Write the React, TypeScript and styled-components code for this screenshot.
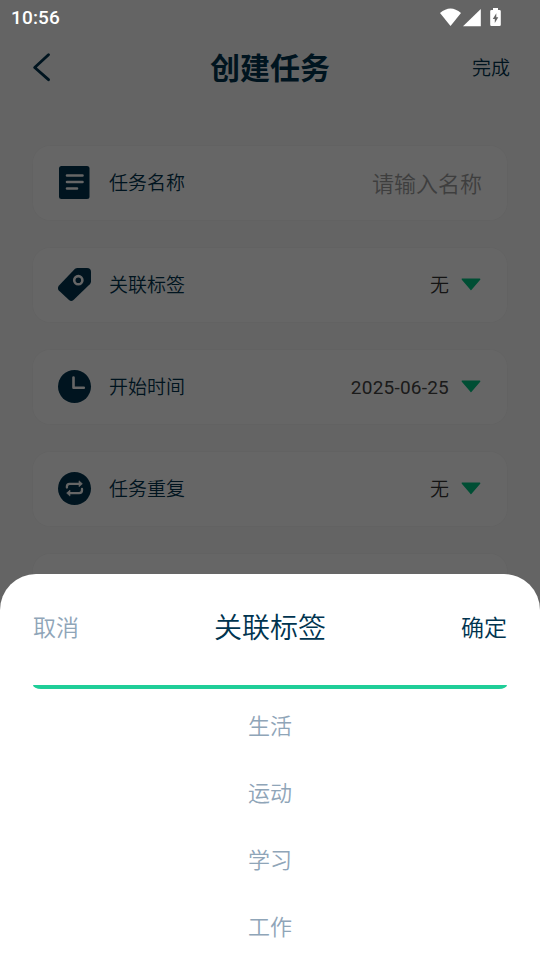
import React from "react";
import styled, { createGlobalStyle } from "styled-components";

const GlobalStyle = createGlobalStyle`
  *, *::before, *::after { box-sizing: border-box; }
  html, body { margin: 0; padding: 0; }
  body { overflow: hidden; }
  button { border: 0; padding: 0; background: none; font: inherit; color: inherit; }
`;

const Screen = styled.main`
  position: relative;
  width: 540px;
  height: 960px;
  overflow: hidden;
  background: #fbfbfb;
  color: #00344f;
  font-family: Roboto, "Noto Sans CJK SC", sans-serif;
  font-weight: 350;
`;

const StatusBar = styled.div`
  position: relative;
  z-index: 3;
  height: 34px;
  padding: 0 39px 0 11px;
  display: flex;
  align-items: center;
  justify-content: space-between;
  color: #fff;
  font-size: 19px;
  font-weight: 500;
  letter-spacing: 0.15px;
`;

const Clock = styled.span`
  padding-top: 1px;
  line-height: 34px;
`;

const StatusIcons = styled.div`
  display: flex;
  height: 30px;
`;

const Header = styled.header`
  height: 66px;
  padding: 0 30px 0 32px;
  display: grid;
  grid-template-columns: 78px 1fr 80px;
  align-items: center;
`;

const BackButton = styled.button`
  display: flex;
`;

const Title = styled.h1`
  margin: 0;
  padding-top: 4px;
  text-align: center;
  font-size: 30px;
  line-height: 40px;
  font-weight: 700;
`;

const DoneButton = styled.button`
  padding-top: 3px;
  text-align: right;
  font-size: 19px;
  line-height: 28px;
`;

const Form = styled.section`
  padding: 46px 33px 0;
  display: flex;
  flex-direction: column;
  gap: 28px;
`;

const Card = styled.div`
  height: 74px;
  flex: none;
  padding: 0 25px;
  border-radius: 17px;
  background: #fff;
  box-shadow: 0 0 2px 1px #f5f5f5;
  display: flex;
  align-items: center;
`;

const Label = styled.span`
  margin-left: 17px;
  padding-top: 2px;
  flex: 1;
  font-size: 19px;
  line-height: 28px;
`;

const Placeholder = styled.span`
  padding-top: 3px;
  color: #9c9c9c;
  font-size: 22px;
  line-height: 30px;
`;

const CardEnd = styled.span`
  display: flex;
  align-items: center;
  margin-right: 1px;
`;

const Value = styled.span<{ $numeric?: boolean }>`
  margin-right: 12px;
  padding-top: 2px;
  color: ${(p) => (p.$numeric ? "#444" : "#333")};
  font-size: 19px;
  line-height: 28px;
  font-weight: ${(p) => (p.$numeric ? 400 : 350)};
  letter-spacing: ${(p) => (p.$numeric ? "0.22px" : "0")};
`;

const Backdrop = styled.div`
  position: absolute;
  inset: 0;
  z-index: 2;
  background: rgba(0, 0, 0, 0.6);
  display: flex;
  align-items: flex-end;
`;

const Sheet = styled.section`
  width: 100%;
  height: 386px;
  padding: 0 33px;
  border-radius: 36px 36px 0 0;
  background: #fff;
`;

const SheetHeader = styled.div`
  height: 111px;
  padding-bottom: 1px;
  display: flex;
  align-items: center;
  justify-content: space-between;
`;

const SheetTitle = styled.h2`
  margin: 0;
  font-size: 28px;
  line-height: 40px;
  font-weight: 350;
`;

const SheetAction = styled.button<{ $muted?: boolean }>`
  color: ${(p) => (p.$muted ? "#8fa5b8" : "#00344f")};
  font-size: 23px;
  line-height: 34px;
`;

const SelectionBar = styled.div`
  height: 4px;
  border-radius: 0 0 8px 8px / 0 0 4px 4px;
  background: #1fce98;
`;

const Options = styled.ul`
  list-style: none;
  margin: 0;
  padding: 4px 0 0;
`;

const Option = styled.li`
  height: 67px;
  line-height: 67px;
  text-align: center;
  font-size: 22px;
  color: #8fa5b8;
`;

const NAVY = "#00344f";

const BackIcon = () => (
  <svg width="20" height="32" viewBox="0 0 20 32" fill="none">
    <path d="M16.5 3.8 2.7 16.5l13.8 12.2" stroke={NAVY} strokeWidth="2.9" strokeLinecap="round" strokeLinejoin="round" />
  </svg>
);

const DocIcon = () => (
  <svg width="34" height="34" viewBox="0 0 34 34" fill="none">
    <rect x="1" y="0" width="30.5" height="33" rx="2.5" fill={NAVY} />
    <path d="M9 9.5h15.5M9 16h15.5M9 22.500h10" stroke="#fff" strokeWidth="2.6" strokeLinecap="round" />
  </svg>
);

const TagIcon = () => (
  <svg width="34" height="34" viewBox="0 0 34 34" fill="none">
    <path d="M17 .8Q18 0 19.5 0H29q4 0 4 4v9.5q0 1.5-1.2 2.7L15.5 32q-2.2 2-4.5 0L.8 22.5Q-1 20 1 17.6Z" fill={NAVY} />
    <circle cx="20.3" cy="12.2" r="4.1" stroke="#fff" strokeWidth="2.6" />
  </svg>
);

const ClockIcon = () => (
  <svg width="34" height="34" viewBox="0 0 34 34" fill="none">
    <circle cx="16.5" cy="16.5" r="16.5" fill={NAVY} />
    <path d="M15.5 7.5v10.2h10.3" stroke="#fff" strokeWidth="2.6" strokeLinecap="round" strokeLinejoin="round" />
  </svg>
);

const RepeatIcon = () => (
  <svg width="34" height="34" viewBox="0 0 34 34" fill="none">
    <circle cx="16.5" cy="16.5" r="16.5" fill={NAVY} />
    <path
      d="M8.9 15.5v-1q0-2.7 2.7-2.7h10.8M24 17v1.2q0 2.900-2.900 2.900H10.800"
      stroke="#fff" strokeWidth="2.3" strokeLinecap="round"
    />
    <path d="m21 8.800 3.400 3-3.400 3ZM12 18.100l-3.400 3 3.400 3Z" fill="#fff" stroke="#fff" strokeWidth=".6" strokeLinejoin="round" />
  </svg>
);

const Caret = () => (
  <svg width="20" height="14" viewBox="0 0 20 14">
    <path d="M1.4 1.200h17.2L10 11.300Z" fill="#00c382" stroke="#00c382" strokeWidth="1.600" strokeLinejoin="round" />
  </svg>
);

const SystemIcons = () => (
  <svg width="62" height="30" viewBox="439 0 62 30" fill="#fff">
    <path d="M440 11q10.500-9 21 0L450.500 24Z" />
    <path d="M480.800 7v17.300H463Z" />
    <path
      fillRule="evenodd"
      d="M493 6h5v2h1.500q1.300 0 1.300 1.300v13.400q0 1.300-1.300 1.300h-8q-1.300 0-1.300-1.300V9.300q0-1.300 1.300-1.300h1.500ZM496.300 11.200l-3.500 5.700h2v4l3.500-5.700h-2Z"
    />
  </svg>
);

type Field = {
  label: string;
  icon: React.ReactNode;
  value?: string;
  numeric?: boolean;
};

const fields: Field[] = [
  { label: "任务名称", icon: <DocIcon /> },
  { label: "关联标签", icon: <TagIcon />, value: "无" },
  { label: "开始时间", icon: <ClockIcon />, value: "2025-06-25", numeric: true },
  { label: "任务重复", icon: <RepeatIcon />, value: "无" },
];

const tags = ["生活", "运动", "学习", "工作"];

export default function App() {
  return (
    <>
      <GlobalStyle />
      <Screen lang="zh-CN">
        <StatusBar>
          <Clock>10:56</Clock>
          <StatusIcons><SystemIcons /></StatusIcons>
        </StatusBar>
        <Header>
          <BackButton aria-label="返回"><BackIcon /></BackButton>
          <Title>创建任务</Title>
          <DoneButton>完成</DoneButton>
        </Header>
        <Form>
          {fields.map((f) => (
            <Card key={f.label}>
              {f.icon}
              <Label>{f.label}</Label>
              {f.value ? (
                <CardEnd>
                  <Value $numeric={f.numeric}>{f.value}</Value>
                  <Caret />
                </CardEnd>
              ) : (
                <Placeholder>请输入名称</Placeholder>
              )}
            </Card>
          ))}
          <Card />
        </Form>
        <Backdrop>
          <Sheet role="dialog">
            <SheetHeader>
              <SheetAction $muted>取消</SheetAction>
              <SheetTitle>关联标签</SheetTitle>
              <SheetAction>确定</SheetAction>
            </SheetHeader>
            <SelectionBar />
            <Options>
              {tags.map((t) => <Option key={t}>{t}</Option>)}
            </Options>
          </Sheet>
        </Backdrop>
      </Screen>
    </>
  );
}
